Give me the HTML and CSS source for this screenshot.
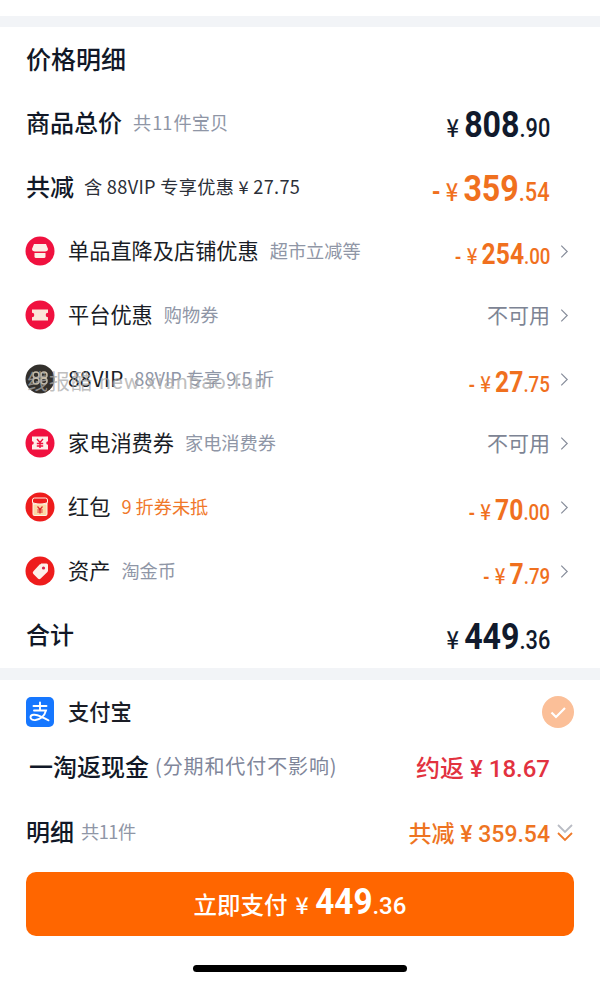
FILE: index.html
```html
<!DOCTYPE html>
<html lang="zh-CN">
<head>
	<meta charset="UTF-8">
	<title>价格明细</title>
	<link rel="stylesheet" href="styles.css">
</head>
<body>

<div class="topstrip"></div>

<!-- price detail -->
<section class="card details">
	<h1 class="row title"><span>价格明细</span></h1>

	<div class="row">
		<div class="left"><span class="head">商品总价</span><span class="note count">共 11 件宝贝</span></div>
		<div class="amount big"><span class="cur">¥</span><span class="int">808</span><span class="dec">.90</span></div>
	</div>

	<div class="row">
		<div class="left"><span class="head">共减</span><span class="note dark">含 88VIP 专享优惠 ¥ 27.75</span></div>
		<div class="amount big orange"><span class="minus">-</span><span class="cur">¥</span><span class="int">359</span><span class="dec">.54</span></div>
	</div>

	<div class="row item">
		<div class="left">
			<svg class="ico" viewBox="0 0 30 30"><circle cx="15" cy="15" r="14.5" fill="#f0113f"/><path d="M9 8h12l2 5c0 2-2 2.400-2.700 2.400H9.700C9 15.400 7 15 7 13z" fill="#fdeee6"/><path d="M9.500 17h11v3.500a1.500 1.500 0 0 1-1.500 1.500h-8a1.500 1.500 0 0 1-1.500-1.500z" fill="#fdeee6"/></svg>
			<span class="name">单品直降及店铺优惠</span><span class="note">超市立减等</span>
		</div>
		<div class="right">
			<div class="amount orange"><span class="minus">-</span><span class="cur">¥</span><span class="int">254</span><span class="dec">.00</span></div>
			<svg class="chev" viewBox="0 0 8 14"><path d="M1 1.500 6.500 7 1 12.500"/></svg>
		</div>
	</div>

	<div class="row item">
		<div class="left">
			<svg class="ico" viewBox="0 0 30 30"><circle cx="15" cy="15" r="14.5" fill="#f0113f"/><path d="M7 9.500h16v3.200a2.300 2.300 0 0 0 0 4.600v3.200H7v-3.200a2.300 2.300 0 0 0 0-4.600z" fill="#fbe6da"/></svg>
			<span class="name">平台优惠</span><span class="note">购物券</span>
		</div>
		<div class="right">
			<span class="unavail">不可用</span>
			<svg class="chev" viewBox="0 0 8 14"><path d="M1 1.500 6.500 7 1 12.500"/></svg>
		</div>
	</div>

	<div class="row item">
		<div class="left">
			<svg class="ico" viewBox="0 0 30 30"><circle cx="15" cy="15" r="14.500" fill="#33302c"/><g fill="none" stroke="#c9bda8" stroke-width="1.500"><circle cx="11" cy="11" r="3"/><circle cx="19" cy="11" r="3"/><circle cx="11" cy="17" r="3"/><circle cx="19" cy="17" r="3"/></g></svg>
			<span class="name">88VIP</span><span class="note">88VIP 专享 9.5 折</span>
		</div>
		<div class="right">
			<div class="amount orange"><span class="minus">-</span><span class="cur">¥</span><span class="int">27</span><span class="dec">.75</span></div>
			<svg class="chev" viewBox="0 0 8 14"><path d="M1 1.500 6.500 7 1 12.500"/></svg>
		</div>
	</div>

	<div class="row item">
		<div class="left">
			<svg class="ico" viewBox="0 0 30 30"><circle cx="15" cy="15" r="14.500" fill="#f0113f"/><path d="M7 8.500h16v4.700a1.800 1.800 0 0 0 0 3.600v4.700H7v-4.700a1.800 1.800 0 0 0 0-3.600z" fill="#fdf0ea"/><path d="M12 11l3 3.500 3-3.500M11.800 15.500h6.400M11.800 18h6.400M15 14.500v5.500" fill="none" stroke="#f0113f" stroke-width="1.400"/></svg>
			<span class="name">家电消费券</span><span class="note">家电消费券</span>
		</div>
		<div class="right">
			<span class="unavail">不可用</span>
			<svg class="chev" viewBox="0 0 8 14"><path d="M1 1.500 6.500 7 1 12.500"/></svg>
		</div>
	</div>

	<div class="row item">
		<div class="left">
			<svg class="ico" viewBox="0 0 30 30"><circle cx="15" cy="15" r="14.500" fill="#ee1c1c"/><rect x="7.500" y="6" width="15" height="18" rx="2" fill="#fdf3e4"/><path d="M7.500 8a2 2 0 0 1 2-2h11a2 2 0 0 1 2 2v2.500c-4 2-11 2-15 0z" fill="#ee1c1c" stroke="#fdf3e4" stroke-width="1"/><rect x="8.500" y="12.500" width="13" height="10.500" rx="1" fill="#fbd9a6"/><path d="M12.500 14.500l2.500 3 2.500-3M12.300 18h5.400M12.300 20h5.400M15 17.500v4" fill="none" stroke="#e0262b" stroke-width="1.200"/></svg>
			<span class="name">红包</span><span class="note orange">9 折券未抵</span>
		</div>
		<div class="right">
			<div class="amount orange"><span class="minus">-</span><span class="cur">¥</span><span class="int">70</span><span class="dec">.00</span></div>
			<svg class="chev" viewBox="0 0 8 14"><path d="M1 1.500 6.500 7 1 12.500"/></svg>
		</div>
	</div>

	<div class="row item">
		<div class="left">
			<svg class="ico" viewBox="0 0 30 30"><circle cx="15" cy="15" r="14.500" fill="#ee1c1c"/><path d="M16 7.500h5.500a1.500 1.500 0 0 1 1.500 1.500v5.500a2 2 0 0 1-.6 1.400l-6.700 6.700a2 2 0 0 1-2.800 0l-4.500-4.500a2 2 0 0 1 0-2.800l6.200-6.700a2.500 2.500 0 0 1 1.400-.6z" fill="#fdf0ea"/><circle cx="18.500" cy="12" r="1.600" fill="#d8204a"/></svg>
			<span class="name">资产</span><span class="note">淘金币</span>
		</div>
		<div class="right">
			<div class="amount orange"><span class="minus">-</span><span class="cur">¥</span><span class="int">7</span><span class="dec">.79</span></div>
			<svg class="chev" viewBox="0 0 8 14"><path d="M1 1.500 6.500 7 1 12.500"/></svg>
		</div>
	</div>

	<div class="row">
		<div class="left"><span class="head">合计</span></div>
		<div class="amount big"><span class="cur">¥</span><span class="int">449</span><span class="dec">.36</span></div>
	</div>

	<div class="watermark">线报酷 new.xianbao.fun</div>
</section>

<!-- payment -->
<section class="card pay">
	<div class="row payrow">
		<div class="left">
			<svg class="ico alipay" viewBox="0 0 28 30"><rect width="28" height="30" rx="5" fill="#1677ff"/><path d="M7.500 9h13M14 5.500V13M8 13.500h12c-1.500 5.500-5 8.500-10.500 9.500-3 .4-5-.8-5-2.700 0-3 5-3.500 10-1 3 1.400 5.500 3 8 4" fill="none" stroke="#fff" stroke-width="1.900" stroke-linecap="round"/></svg>
			<span class="name medium">支付宝</span>
		</div>
		<svg class="check" viewBox="0 0 32 32"><circle cx="16" cy="16" r="16" fill="#fbbf98"/><path d="M9.500 16.500l4.500 4.500 9-9" fill="none" stroke="#fff" stroke-width="2.200"/></svg>
	</div>

	<div class="row cashback">
		<div class="left"><span class="head">一淘返现金</span><span class="note wide">(分期和代付不影响)</span></div>
		<div class="rebate">约返 ¥ 18.67</div>
	</div>

	<div class="row summary">
		<div class="left"><span class="head">明细</span><span class="note tight">共11件</span></div>
		<div class="right">
			<div class="saved">共减 ¥ 359.54</div>
			<svg class="dbl" viewBox="0 0 18 20"><path d="M2 2l7 7 7-7" stroke="#b9bcc4"/><path d="M2 10l7 7 7-7" stroke="#ee7a2b"/></svg>
		</div>
	</div>

	<button class="paybtn"><span class="paylabel">立即支付</span><span class="cur">¥</span><span class="int">449</span><span class="dec">.36</span></button>

	<div class="homebar"></div>
</section>

</body>
</html>
```

FILE: styles.css
```css
html { background-color: #fff; }
body { margin: 0; background-color: #f2f4f7; font-family: "Noto Sans CJK SC", sans-serif; color: #111827; overflow: hidden; height: 983px; }
h1 { margin: 0; }
svg { display: block; flex: none; }

.topstrip { height: 16px; background-color: #fff; margin-bottom: 11px; }
.card { background-color: #fff; padding: 0 26px; }
.details { position: relative; height: 641px; margin-bottom: 12px; }
.pay { height: 303px; }

.row { display: flex; align-items: center; justify-content: space-between; height: 64px; }
.left { display: flex; align-items: center; }
.right { display: flex; align-items: center; align-self: stretch; position: relative; margin-right: 24px; }

.title { font-size: 25px; font-weight: 500; padding-bottom: 3px; box-sizing: border-box; }
.head { font-size: 24px; font-weight: 500; line-height: 1; margin-bottom: 2px; }
.name { font-size: 21.200px; font-weight: 400; color: #1a1d26; line-height: 1; margin: 0 0 2px 13px; }
.medium { font-weight: 500; }
.note { font-size: 18.200px; color: #8f96a6; margin: 0 0 2px 11px; line-height: 1; }
.note.count { word-spacing: -3px; }
.note.dark { color: #2b2f38; margin-left: 10px; letter-spacing: 0.3px; }
.note.orange { color: #f0782a; }
.note.wide { font-size: 20px; margin-left: 6px; color: #80869a; letter-spacing: 0.9px; }
.note.tight { margin-left: 7px; letter-spacing: -0.5px; }

.ico { width: 30px; height: 30px; margin-left: -1px; }
.alipay { width: 28px; height: 30px; margin-left: 0; }
.alipay + .name { margin-left: 14px; }
.check { width: 32px; height: 32px; }
.chev { position: absolute; left: 100%; margin-left: 10px; width: 9px; height: 15px; top: 50%; margin-top: -7px; fill: none; stroke: #868c9a; stroke-width: 1.100; }
.dbl { position: absolute; left: 100%; margin-left: 6px; width: 18px; height: 20px; top: 50%; margin-top: -9px; fill: none; stroke-width: 1.800; }

.row > .amount, .row > .rebate { margin-right: 24px; }
/* numbers in the reference are condensed, so squeeze the whole amount towards its right end */
.amount { display: flex; align-items: baseline; font-family: Roboto, sans-serif; font-weight: 700; color: #111a2c; white-space: nowrap; transform: scaleX(0.85); transform-origin: right center; margin-top: 5px; }
.amount .cur { font-family: "Noto Sans CJK SC", sans-serif; font-size: 22px; font-weight: 500; margin-right: 5px; }
.amount .minus { font-size: 20px; margin-right: 6px; }
.amount .int { font-size: 29px; }
.amount .dec { font-size: 22px; font-weight: 500; }
.amount.big { transform: scaleX(0.87); margin-top: 3px; }
.amount.big .cur { font-size: 25px; margin-right: 6px; }
.amount.big .int { font-size: 37px; }
.amount.big .dec { font-size: 25px; }
.amount.big .minus { font-size: 26px; }
.amount.orange { color: #f0701e; }

.unavail { font-size: 21px; color: #7d8494; line-height: 1; margin-bottom: 2px; }

.payrow { height: 64px; }
.cashback { height: 48px; padding-left: 3px; padding-bottom: 3px; box-sizing: border-box; }
.rebate { font-size: 24px; font-weight: 500; color: #e2323f; font-family: Roboto, "Noto Sans CJK SC", sans-serif; }
.summary { height: 80px; }
.saved { font-size: 23px; font-weight: 500; color: #ee7422; font-family: Roboto, "Noto Sans CJK SC", sans-serif; }

.paybtn { display: flex; align-items: baseline; justify-content: center; width: 100%; height: 64px; padding: 8px 0 0; margin: 0; border: 0; border-radius: 10px; background-color: #ff6600; color: #fff; font-family: Roboto, sans-serif; font-weight: 700; }
.paylabel { font-family: "Noto Sans CJK SC", sans-serif; font-size: 23.500px; font-weight: 500; margin-right: 8px; }
.paybtn .cur { font-family: "Noto Sans CJK SC", sans-serif; font-size: 23px; font-weight: 500; margin-right: 6px; }
.paybtn .int { font-size: 37px; transform: scaleX(0.9); margin: 0 -3px; }
.paybtn .dec { font-size: 24px; font-weight: 500; }

.homebar { width: 214px; height: 7px; border-radius: 4px; background-color: #000; margin: 29px auto 0; }

.watermark { position: absolute; left: 27px; top: 338px; font-size: 21px; color: rgba(170, 170, 170, 0.75); white-space: nowrap; font-family: Roboto, "Noto Sans CJK SC", sans-serif; letter-spacing: 1px; }
```
